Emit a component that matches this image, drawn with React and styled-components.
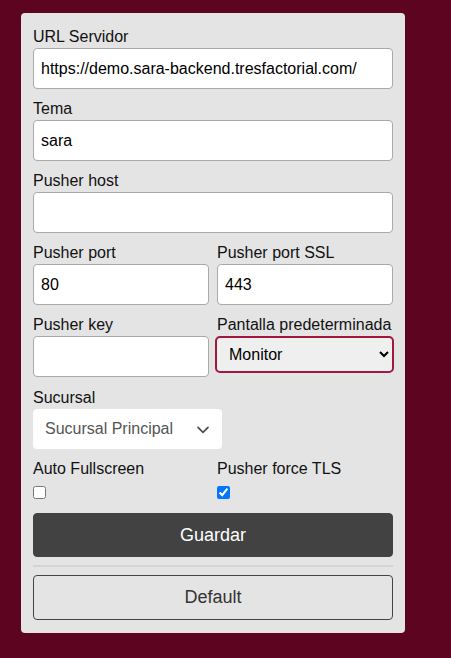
import React from 'react';
import styled, { createGlobalStyle } from 'styled-components';

const GlobalStyle = createGlobalStyle`
  html, body {
    margin: 0;
    padding: 0;
    background: #5c0420;
    font-family: "Liberation Sans", Arial, sans-serif;
  }
`;

const Page = styled.div`
  min-height: 658px;
  padding: 13px 0 0 21px;
  box-sizing: border-box;
`;

const Card = styled.form`
  width: 384px;
  box-sizing: border-box;
  padding: 14px 12px 13px;
  background: #e4e4e4;
  border-radius: 4px;
`;

const Field = styled.div`
  margin-bottom: 10px;
`;

const Row = styled.div`
  display: grid;
  grid-template-columns: 1fr 1fr;
  column-gap: 8px;
  margin-bottom: ${p => p.$gap || '10px'};
`;

const Label = styled.label`
  display: block;
  font-size: 16px;
  line-height: 19px;
  color: #111;
  margin-bottom: 2px;
  white-space: nowrap;
`;

const Input = styled.input`
  display: block;
  width: 100%;
  height: 41px;
  box-sizing: border-box;
  padding: 0 7px;
  border: 1px solid #a9a9a9;
  border-radius: 4px;
  background: #fff;
  font-family: inherit;
  font-size: 16px;
  color: #000;
  outline: none;
`;

const NativeSelect = styled.select`
  display: block;
  width: calc(100% + 3px);
  margin-left: -2px;
  height: 37px;
  box-sizing: border-box;
  padding: 0 8px 0 8px;
  border: 2px solid #a1173d;
  border-radius: 5px;
  background: #efefef;
  font-family: inherit;
  font-size: 16px;
  color: #000;
  outline: none;
`;

const BranchSelect = styled.div`
  display: flex;
  align-items: center;
  justify-content: space-between;
  width: 189px;
  height: 40px;
  box-sizing: border-box;
  padding: 0 12px;
  background: #fff;
  border-radius: 4px;
  font-size: 16px;
  color: #555;
`;

const Check = styled.input.attrs({ type: 'checkbox' })`
  display: block;
  margin: 8px 0 0;
  width: 13px;
  height: 13px;
  accent-color: #0075ff;
`;

const Button = styled.button`
  display: block;
  width: 100%;
  height: ${p => (p.$primary ? '44px' : '45px')};
  border: 1px solid ${p => (p.$primary ? '#424242' : '#444')};
  border-radius: 4px;
  background: ${p => (p.$primary ? '#424242' : 'transparent')};
  color: ${p => (p.$primary ? '#fff' : '#333')};
  font-family: inherit;
  font-size: 18px;
  cursor: pointer;
`;

const Divider = styled.hr`
  margin: 8px 0 8px;
  border: none;
  height: 2px;
  background: #d4d4d4;
`;

function Chevron() {
  return (
    <svg width="14" height="10" viewBox="0 0 16 12">
      <path d="M2 4l6 6 6-6" fill="none" stroke="#4a4a4a" strokeWidth="2" strokeLinecap="round" strokeLinejoin="round" />
    </svg>
  );
}

export default function App() {
  return (
    <Page>
      <GlobalStyle />
      <Card onSubmit={e => e.preventDefault()}>
        <Field>
          <Label>URL Servidor</Label>
          <Input defaultValue="https://demo.sara-backend.tresfactorial.com/" />
        </Field>
        <Field>
          <Label>Tema</Label>
          <Input defaultValue="sara" />
        </Field>
        <Field>
          <Label>Pusher host</Label>
          <Input defaultValue="" />
        </Field>
        <Row>
          <div>
            <Label>Pusher port</Label>
            <Input defaultValue="80" />
          </div>
          <div>
            <Label>Pusher port SSL</Label>
            <Input defaultValue="443" />
          </div>
        </Row>
        <Row $gap="11px">
          <div>
            <Label>Pusher key</Label>
            <Input defaultValue="" />
          </div>
          <div>
            <Label>Pantalla predeterminada</Label>
            <NativeSelect defaultValue="monitor">
              <option value="monitor">Monitor</option>
              <option value="turnos">Turnos</option>
            </NativeSelect>
          </div>
        </Row>
        <Field>
          <Label>Sucursal</Label>
          <BranchSelect>
            <span>Sucursal Principal</span>
            <Chevron />
          </BranchSelect>
        </Field>
        <Row $gap="14px">
          <div>
            <Label>Auto Fullscreen</Label>
            <Check />
          </div>
          <div>
            <Label>Pusher force TLS</Label>
            <Check defaultChecked />
          </div>
        </Row>
        <Button $primary type="submit">Guardar</Button>
        <Divider />
        <Button type="button">Default</Button>
      </Card>
    </Page>
  );
}
